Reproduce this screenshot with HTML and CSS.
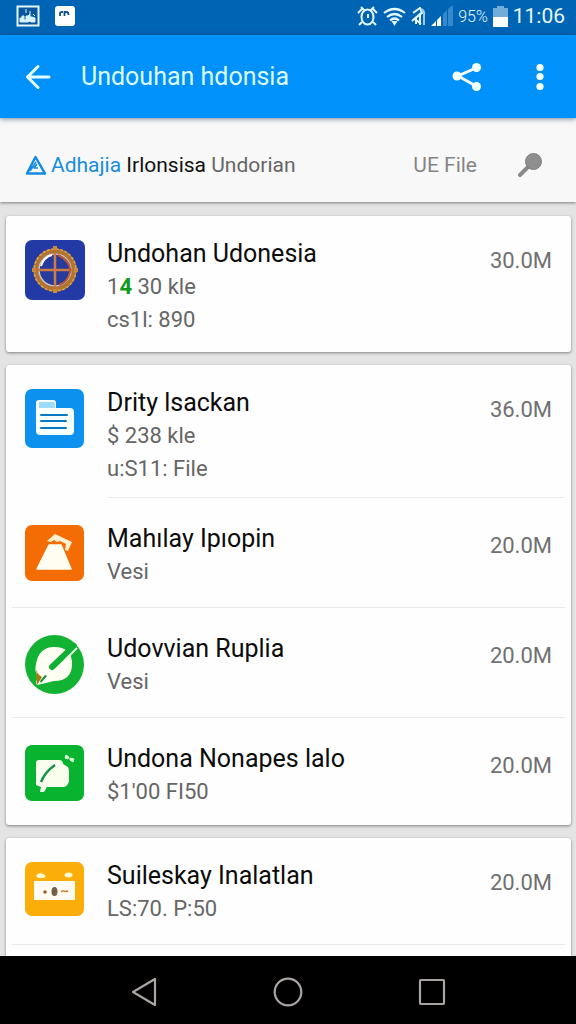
FILE: index.html
```html
<!DOCTYPE html>
<html lang="id">
<head>
<meta charset="utf-8">
<meta name="viewport" content="width=device-width, initial-scale=1">
<title>Undouhan hdonsia</title>
<link rel="stylesheet" href="styles.css">
</head>
<body>
<div class="screen">
  <div class="status">
    <div class="status-group">
      <svg width="24" height="22" viewBox="0 0 24 22"><rect x="1.5" y="1.5" width="21" height="19" fill="#0a559c" stroke="#e4f7ff" stroke-width="2"/><path d="M4 17v-4h2v-2h2v4h2v-4h2l2-2v3h2l3 1v4h-4l-1-1-2 1H4zM10 4v4M14 6v3M17 9l2 2" fill="#d7f3ff" stroke="#d7f3ff"/></svg>
      <svg width="20" height="20" viewBox="0 0 20 20"><rect width="20" height="20" rx="3" fill="#fff"/><path d="M5 10V7q0-1 3-1M9.500 10V6h2q2 0 2 3" fill="none" stroke="#0a4f94" stroke-width="1.800"/></svg>
    </div>
    <div class="status-group status-right">
      <svg width="21" height="20" viewBox="0 0 21 20" fill="none" stroke="#e4f7ff" stroke-width="2"><ellipse cx="10.500" cy="11" rx="6" ry="7.500"/><path d="M4 1l4 4M1 7l4-4M17 1l-4 4M20 7l-4-4M5 16l-3 3M16 16l3 3M11 8v4"/></svg>
      <svg width="23" height="19" viewBox="0 0 23 19" fill="none" stroke="#e4f7ff" stroke-width="2.200"><path d="M1 6q10.500-8 21 0M4 10q7.500-6 15 0M7 13.500q4.500-4 9 0"/><path d="M8.500 14h6l-3 5z" fill="#e4f7ff" stroke="none"/></svg>
      <svg width="15" height="19" viewBox="0 0 15 19" fill="none" stroke="#e4f7ff" stroke-width="2"><path d="M2 6l7-5 2 5-9 7M1 14l8-7v11M5 11v6M4 12l6 5"/><path d="M10 2q4 2 3 6v10" stroke="#9ccbf0"/></svg>
      <svg width="22" height="22" viewBox="0 0 22 22"><path d="M0 21l5-5v5zM6 15l4-4v10H6z" fill="#fff"/><path d="M12 9l4-4v16h-4zM17 4l5-4v21h-5z" fill="#3588cc"/></svg>
      <span class="percent">95%</span>
      <svg width="15" height="21" viewBox="0 0 15 21"><path d="M4 0h7v2h4v9H0V2h4z" fill="#72acdb"/><path d="M0 11h15v10H0z" fill="#fff"/></svg>
      <time class="clock">11:06</time>
    </div>
  </div>

  <header class="appbar">
    <button class="icon-button" aria-label="Kembali"><svg width="26" height="26" viewBox="0 0 26 26" fill="none" stroke="#e6ffff" stroke-width="3" stroke-linecap="round" stroke-linejoin="round"><path d="M24 13H3M13 2.500L2.500 13 13 23.500"/></svg></button>
    <h1 class="title">Undouhan hdonsia</h1>
    <button class="icon-button" aria-label="Bagikan"><svg width="30" height="30" viewBox="0 0 30 30"><path d="M24 6L6 14l18 10" fill="none" stroke="#f3ffff" stroke-width="3"/><g fill="#f3ffff"><circle cx="24.500" cy="5.500" r="4.500"/><circle cx="5" cy="14" r="4.500"/><circle cx="24.500" cy="24.500" r="4.500"/></g></svg></button>
    <button class="icon-button more" aria-label="Menu"><svg width="8" height="28" viewBox="0 0 8 28" fill="#f3ffff"><circle cx="4" cy="4.500" r="3.600"/><circle cx="4" cy="13.500" r="3.600"/><circle cx="4" cy="23.500" r="3.600"/></svg></button>
  </header>

  <div class="filterbar">
    <svg width="22" height="21" viewBox="0 0 22 21" fill="none" stroke="#148be0" stroke-width="2.500" stroke-linejoin="round"><path d="M10.500 2L2 18.500h18z"/><path d="M11 7l-6 9M12 9l-3 4h4M6 12l2 1" stroke-width="1.500"/></svg>
    <p class="crumbs"><a class="crumb-link" href="#">Adhajia</a> <span class="crumb-current">Irlonsisa</span> Undorian</p>
    <span class="scope">UE File</span>
    <button class="icon-button" aria-label="Cari"><svg width="26" height="26" viewBox="0 0 26 26"><path d="M12 14l-9 9" stroke="#8a8a8a" stroke-width="4" stroke-linecap="round"/><circle cx="16.500" cy="9.500" r="8" fill="#8f8f8f" stroke="#7f7f7f"/></svg></button>
  </div>

  <main class="content">
    <ul class="card">
      <li class="row tall">
        <svg class="app-icon" width="60" height="60" viewBox="0 0 60 60"><rect width="60" height="60" rx="7" fill="#2339a5"/><circle cx="30" cy="30" r="19" fill="#263b9b" stroke="#b0752f" stroke-width="5"/><circle cx="30" cy="30" r="21" fill="none" stroke="#dda54c" stroke-width="1.500" stroke-dasharray="3 1.500"/><path d="M28 6h4v4h-4zM28 49h4v4h-4zM7 28h4v4H7zM49 28h4v4h-4z" fill="#c98b3b"/><circle cx="30" cy="30" r="16" fill="none" stroke="#d6c8c1" stroke-width="1.500"/><path d="M30 13v34M13 30h34" stroke="#d07a45" stroke-width="2.500"/><path d="M33 15q13 6 12 17-2 10-11 13" fill="none" stroke="#b75833" stroke-width="2"/><path d="M16 26q3-9 11-11" fill="none" stroke="#fff" stroke-width="2"/></svg>
        <div class="info"><h2 class="name">Undohan Udonesia</h2><p class="meta">1<b class="up">4</b> 30 kle</p><p class="meta">cs1l: 890</p></div>
        <span class="size">30.0M</span>
      </li>
    </ul>

    <ul class="card">
      <li class="row tall">
        <svg class="app-icon" width="60" height="60" viewBox="0 0 60 60"><rect width="59" height="59" rx="7" fill="#0c91ee"/><path d="M14 11h14q3 0 3 3v5h14q4 0 4 4v19q0 4-4 4H15q-4 0-4-4V14q0-3 3-3z" fill="#f7ffff"/><path d="M14 13h14q2 0 2 3v3H14z" fill="#9edcff"/><path d="M16 26h26M16 32h25M16 39h25" stroke="#0878c2" stroke-width="2" stroke-linecap="round"/></svg>
        <div class="info"><h2 class="name">Drity lsackan</h2><p class="meta">$ 238 kle</p><p class="meta">u:S11: File</p></div>
        <span class="size">36.0M</span>
      </li>
      <li class="row">
        <svg class="app-icon" width="60" height="56" viewBox="0 0 60 56"><rect width="59" height="56" rx="7" fill="#f46c04"/><path d="M24 20h12l10 24H12z" fill="#fffdf2" stroke="#fffdf2" stroke-width="1.500" stroke-linejoin="round"/><path d="M22 16l8-7 17 8-4 9-3-1 1-6-6-3-3 1-3-2-3 2z" fill="#fff0cf"/></svg>
        <div class="info"><h2 class="name">Mahılay Ipıopin</h2><p class="meta">Vesi</p></div>
        <span class="size">20.0M</span>
      </li>
      <li class="row">
        <svg class="app-icon" width="60" height="60" viewBox="0 0 60 60"><circle cx="29.500" cy="29.500" r="29.500" fill="#12b332"/><path d="M29 12q18 0 18 17 0 17-18 17l-8 2-9 2q-2-3 1-8-4-6-2-13 3-17 18-17z" fill="#fffff4"/><path d="M11 32q0 7 6 10l-5 8z" fill="#a87812"/><path d="M15 46l5-6 2 1-6 7z" fill="#12953a"/><path d="M27 32L49 11" stroke="#0faf34" stroke-width="6" stroke-linecap="round"/><path d="M40 25l12-12" stroke="#e9ffe8" stroke-width="1.800"/></svg>
        <div class="info"><h2 class="name">Udovvian Ruplia</h2><p class="meta">Vesi</p></div>
        <span class="size">20.0M</span>
      </li>
      <li class="row">
        <svg class="app-icon" width="60" height="56" viewBox="0 0 60 56"><rect width="59" height="56" rx="7" fill="#08b42f"/><path d="M14 15h20q4 0 4 4l5 3q1 2 1 5v9q-1 5-5 6H22l-3 5h-4l1-5-5-2V18q0-3 3-3z" fill="#faffed"/><path d="M16 37q4-10 14-17" fill="none" stroke="#149247" stroke-width="2.500"/><path d="M41 10l3 2-1 2-3-1zM45 13l4 1-1 3-3-2z" fill="#d8ffd2" stroke="#d8ffd2"/></svg>
        <div class="info"><h2 class="name">Undona Nonapes lalo</h2><p class="meta">$1'00 FI50</p></div>
        <span class="size">20.0M</span>
      </li>
    </ul>

    <ul class="card">
      <li class="row tall short">
        <svg class="app-icon" width="60" height="54" viewBox="0 0 60 54"><rect width="59" height="54" rx="7" fill="#fbad09"/><rect x="9" y="19" width="41" height="19" rx="1" fill="#fffdf3"/><path d="M11 14q3-6 10 0l-2 2h-6z" fill="#fff9cf"/><ellipse cx="43.500" cy="13" rx="4" ry="2.500" fill="#fff9cf"/><ellipse cx="29.500" cy="29.500" rx="3" ry="4.500" fill="#76604b"/><circle cx="20" cy="30" r="1.800" fill="#a55a26"/><path d="M36 30q2-2 3-1t4 0" fill="none" stroke="#cf7b2b" stroke-width="1.500"/></svg>
        <div class="info"><h2 class="name">Suileskay Inalatlan</h2><p class="meta">LS:70. P:50</p></div>
        <span class="size">20.0M</span>
      </li>
      <li class="row" aria-hidden="true"></li>
    </ul>
  </main>

  <nav class="navbar">
    <button class="icon-button" aria-label="Back"><svg width="28" height="30" viewBox="0 0 28 30" fill="none" stroke="#aaa5a2" stroke-width="2.200" stroke-linejoin="round"><path d="M25 2v26L3 15z"/></svg></button>
    <button class="icon-button" aria-label="Home"><svg width="30" height="30" viewBox="0 0 30 30" fill="none" stroke="#aaa5a2" stroke-width="2.200"><circle cx="15" cy="15" r="13.300"/></svg></button>
    <button class="icon-button" aria-label="Recent"><svg width="28" height="28" viewBox="0 0 28 28" fill="none" stroke="#aaa5a2" stroke-width="2.200"><rect x="2" y="2" width="24" height="24" rx="1"/></svg></button>
  </nav>
</div>
</body>
</html>
```
FILE: styles.css
```css
* { box-sizing: border-box; margin: 0; }

body {
  font-family: Roboto, "Liberation Sans", sans-serif;
  background: #e4e4e5;
}

.screen {
  display: flex;
  flex-direction: column;
  height: 100vh;
}

svg { display: block; flex: none; }

.icon-button {
  display: block;
  padding: 0;
  border: 0;
  background: none;
  cursor: pointer;
}

.status {
  display: flex;
  flex: none;
  justify-content: space-between;
  height: 35px;
  padding: 0 11px 3px 16px;
  background: #0064b5;
  color: #e4f7ff;
}

.status-group {
  display: flex;
  align-items: center;
  gap: 15px;
}

.status-right { gap: 5px; }
.percent { font-size: 16px; font-weight: 300; }
.clock { font-size: 21px; }

.appbar {
  display: flex;
  flex: none;
  align-items: center;
  height: 83px;
  padding: 0 32px 0 25px;
  background: #0091fa;
  box-shadow: 0 1px 5px rgba(40, 60, 90, 0.6);
  z-index: 1;
}

.title {
  flex: 1;
  padding-left: 30px;
  color: #dcfbff;
  font-size: 25px;
  font-weight: 400;
}

.more { margin-left: 54px; }

.filterbar {
  display: flex;
  flex: none;
  align-items: center;
  height: 84px;
  padding: 10px 33px 0 25px;
  background: #f8f8f8;
  box-shadow: 0 1px 3px rgba(0, 0, 0, 0.45);
  color: #666;
  font-size: 21px;
}

.crumbs { flex: 1; padding-left: 4px; white-space: nowrap; }
.crumb-link { color: #168ddd; text-decoration: none; }
.crumb-current { color: #111; }
.scope { padding-right: 40px; color: #858585; }

.content {
  display: flex;
  flex: 1;
  flex-direction: column;
  gap: 13px;
  min-height: 0;
  padding: 14px 5px 0 6px;
  overflow: hidden;
}

.card {
  flex: none;
  padding: 0;
  border-radius: 3px;
  background: #fefefe;
  box-shadow: 0 1px 3px rgba(0, 0, 0, 0.45);
  list-style: none;
}

.row {
  display: flex;
  align-items: flex-start;
  min-height: 110px;
  margin: 0 6px;
  padding: 25px 13px 11px;
}

.row + .row { border-top: 1px solid #e8e8e8; }
.row + .row:last-child { min-height: 108px; }
.tall { min-height: 136px; padding-top: 22px; }
.tall:not(:last-child) { min-height: 132px; }

/* The divider under a three-line row starts at the text column. */
.tall:not(.short) + .row {
  border-top-color: transparent;
  background: linear-gradient(#ebebeb, #ebebeb) right top / calc(100% - 95px) 1px no-repeat border-box;
}

.short:not(:last-child) { min-height: 106px; }

.app-icon { margin-top: 2px; }
.info { flex: 1; padding-left: 22px; }

.name {
  color: #0c0c0c;
  font-size: 25px;
  font-weight: 400;
  line-height: 32px;
}

.meta {
  color: #666;
  font-size: 22px;
  line-height: 33px;
}

.up { color: #109a1c; }

.size {
  margin-top: 7px;
  color: #707070;
  font-size: 22px;
  line-height: 32px;
}

.navbar {
  display: flex;
  flex: none;
  align-items: center;
  justify-content: space-between;
  height: 68px;
  padding: 4px 130px 0;
  background: #000;
}
```
